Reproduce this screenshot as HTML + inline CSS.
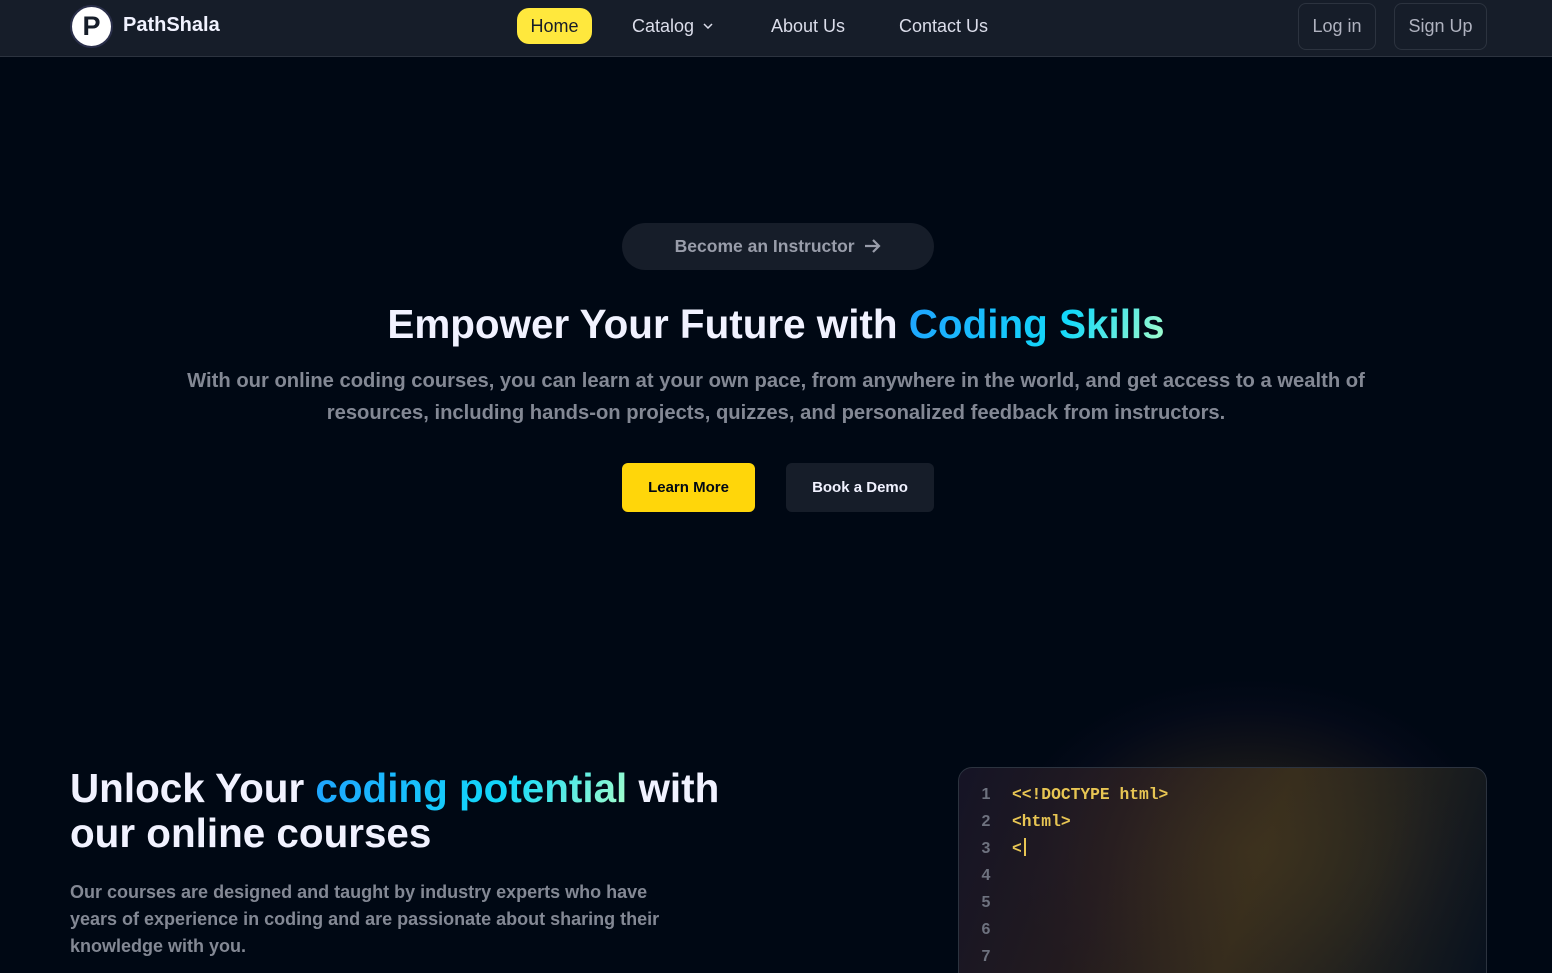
<!DOCTYPE html>
<html><head><meta charset="utf-8"><style>
*{margin:0;padding:0;box-sizing:border-box}
html,body{width:1552px;height:973px;overflow:hidden}
body{background:#000814;font-family:"Liberation Sans",sans-serif;position:relative}
.nav{height:57px;background:#161d29;border-bottom:1px solid #2c333f;position:relative}
.abs{position:absolute}
.logo{left:70px;top:5px;width:43px;height:43px;border-radius:50%;background:#fff;border:2px solid #2a2f4a;color:#161d29;font-weight:bold;font-size:27px;text-align:center;line-height:39px}
.brand{left:123px;top:14px;color:#f1f2ff;font-weight:bold;font-size:20px}
.link{top:16px;color:#dbddea;font-size:18px}
.home{left:517px;top:8px;width:75px;height:36px;border-radius:12px;background:#ffe83d;color:#161d29;font-size:18px;text-align:center;line-height:36px}
.btn{top:3px;height:47px;border:1px solid #2c333f;border-radius:8px;color:#afb2bf;font-size:18px;text-align:center;line-height:45px;background:#161d29}
.grad{background:linear-gradient(118deg,#1fa2ff,#12d8fa 60%,#a6ffcb);-webkit-background-clip:text;color:transparent}
</style></head><body>
<div class="nav">
<div class="abs logo">P</div>
<div class="abs brand">PathShala</div>
<div class="abs home">Home</div>
<div class="abs link" style="left:632px">Catalog <svg width="10" height="6" viewBox="0 0 10 6" style="vertical-align:3px;margin-left:4px"><path d="M1 1l4 4 4-4" stroke="#dbddea" stroke-width="1.5" fill="none"/></svg></div>
<div class="abs link" style="left:771px">About Us</div>
<div class="abs link" style="left:899px">Contact Us</div>
<div class="abs btn" style="left:1298px;width:78px">Log in</div>
<div class="abs btn" style="left:1394px;width:93px">Sign Up</div>
</div>
<div class="abs" style="left:622px;top:223px;width:312px;height:47px;border-radius:24px;background:#161d29;color:#999daa;font-weight:bold;font-size:17.5px;text-align:center;line-height:47px">Become an Instructor &nbsp;<svg width="17" height="14" viewBox="0 0 17 14" style="vertical-align:-1px"><path d="M1 7H15M9 1l6 6-6 6" stroke="#999daa" stroke-width="2.2" fill="none"/></svg></div>
<div class="abs" style="left:0;width:1552px;top:301px;text-align:center;color:#f1f2ff;font-weight:bold;font-size:40.4px">Empower Your Future with <span class="grad">Coding Skills</span></div>
<div class="abs" style="left:171px;width:1210px;top:365px;text-align:center;color:#838894;font-weight:bold;font-size:20.2px;line-height:32px">With our online coding courses, you can learn at your own pace, from anywhere in the world, and get access to a wealth of resources, including hands-on projects, quizzes, and personalized feedback from instructors.</div>
<div class="abs" style="left:622px;top:463px;width:133px;height:49px;border-radius:6px;background:#ffd60a;color:#000814;font-weight:bold;font-size:15px;text-align:center;line-height:49px">Learn More</div>
<div class="abs" style="left:786px;top:463px;width:148px;height:49px;border-radius:6px;background:#161d29;color:#f1f2ff;font-weight:bold;font-size:15px;text-align:center;line-height:49px">Book a Demo</div>
<div class="abs" style="left:70px;top:766px;color:#f1f2ff;font-weight:bold;font-size:40.4px;line-height:45px">Unlock Your <span class="grad">coding potential</span> with<br>our online courses</div>
<div class="abs" style="left:70px;top:879px;width:620px;color:#838894;font-weight:bold;font-size:18px;line-height:27px">Our courses are designed and taught by industry experts who have years of experience in coding and are passionate about sharing their knowledge with you.</div>
<div class="abs" style="left:1010px;top:680px;width:480px;height:340px;border-radius:50%;background:radial-gradient(ellipse,rgba(255,200,60,.18),rgba(140,90,60,.1) 45%,rgba(80,40,90,.05) 60%,transparent 72%)"></div>
<div class="abs" style="left:958px;top:767px;width:529px;height:230px;border:1px solid #2c333f;border-radius:14px;background:linear-gradient(110deg,rgba(30,25,45,.7),rgba(50,35,35,.7) 30%,rgba(65,52,30,.8) 55%,rgba(55,50,35,.6) 75%,rgba(10,20,35,.7));font-family:'Liberation Mono','DejaVu Sans Mono',monospace;font-weight:bold;font-size:16px;line-height:27px">
<div class="abs" style="left:22px;top:13px;color:#6e727f;font-family:'Liberation Sans';text-align:center;width:10px">1<br>2<br>3<br>4<br>5<br>6<br>7</div>
<div class="abs" style="left:53px;top:13px;color:#e7c553;font-size:16.3px">&lt;&lt;!DOCTYPE html&gt;<br>&lt;html&gt;<br>&lt;<span style="display:inline-block;width:2px;height:18px;background:#e7c553;vertical-align:-3px;margin-left:2px"></span></div>
</div>
</body></html>
